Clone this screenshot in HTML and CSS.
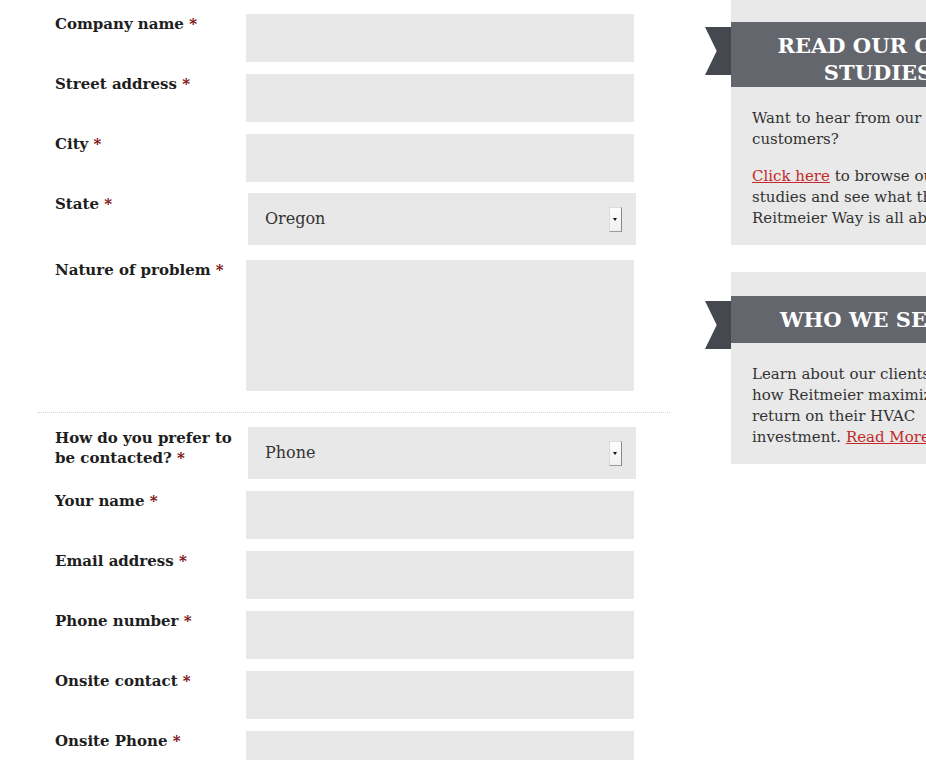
FILE: index.html
```html
<!DOCTYPE html>
<html lang="en">
<head>
<meta charset="utf-8">
<title>Service request</title>
<link rel="stylesheet" href="styles.css">
</head>
<body>
<div class="page">
  <form class="form">
    <div class="row">
      <label class="label" for="company">Company name <span class="req">*</span></label>
      <input class="field" id="company" type="text">
    </div>
    <div class="row">
      <label class="label" for="street">Street address <span class="req">*</span></label>
      <input class="field" id="street" type="text">
    </div>
    <div class="row">
      <label class="label" for="city">City <span class="req">*</span></label>
      <input class="field" id="city" type="text">
    </div>
    <div class="row">
      <label class="label" for="state">State <span class="req">*</span></label>
      <div class="select-wrap">
        <select class="select" id="state"><option>Oregon</option></select>
        <span class="select-btn"></span>
      </div>
    </div>
    <div class="row row-area">
      <label class="label" for="problem">Nature of problem <span class="req">*</span></label>
      <textarea class="field area" id="problem"></textarea>
    </div>
    <hr class="divider">
    <div class="row">
      <label class="label" for="contact">How do you prefer to be contacted? <span class="req">*</span></label>
      <div class="select-wrap">
        <select class="select" id="contact"><option>Phone</option></select>
        <span class="select-btn"></span>
      </div>
    </div>
    <div class="row">
      <label class="label" for="name">Your name <span class="req">*</span></label>
      <input class="field" id="name" type="text">
    </div>
    <div class="row">
      <label class="label" for="email">Email address <span class="req">*</span></label>
      <input class="field" id="email" type="text">
    </div>
    <div class="row">
      <label class="label" for="phone">Phone number <span class="req">*</span></label>
      <input class="field" id="phone" type="text">
    </div>
    <div class="row">
      <label class="label" for="onsite">Onsite contact <span class="req">*</span></label>
      <input class="field" id="onsite" type="text">
    </div>
    <div class="row">
      <label class="label" for="onsitephone">Onsite Phone <span class="req">*</span></label>
      <input class="field" id="onsitephone" type="text">
    </div>
  </form>

  <aside class="sidebar">
    <section class="panel">
      <h2 class="panel-title panel-title-two">Read our case studies</h2>
      <div class="panel-body">
        <p>Want to hear from our Reitmeier customers?</p>
        <p><a href="#">Click here</a> to browse our case studies and see what the Reitmeier Way is all about.</p>
      </div>
    </section>
    <section class="panel">
      <h2 class="panel-title">Who we serve</h2>
      <div class="panel-body">
        <p>Learn about our clients and see how Reitmeier maximizes the return on their HVAC investment. <a href="#">Read More</a></p>
      </div>
    </section>
  </aside>
</div>
</body>
</html>
```

FILE: styles.css
```css
html, body {
  margin: 0;
  padding: 0;
  background: #fff;
  overflow: hidden;
}

body {
  font-family: "DejaVu Serif", "Liberation Serif", serif;
  color: #333;
}

.page {
  display: flex;
  align-items: flex-start;
  padding-left: 38px;
  gap: 61px;
  width: 1300px;
}

.form {
  width: 632px;
  flex: none;
  padding-top: 14px;
}

.row {
  display: grid;
  grid-template-columns: 191px 388px;
  padding-left: 17px;
  margin-bottom: 12px;
  align-items: start;
}

.label {
  font-size: 15px;
  font-weight: bold;
  line-height: 20px;
  color: #1e1e1e;
  padding-right: 4px;
}

.req {
  color: #7b0d0d;
}

.field {
  box-sizing: border-box;
  width: 388px;
  height: 48px;
  margin: 0;
  border: none;
  background: #e8e8e8;
  font: inherit;
  display: block;
}

.area {
  height: 131px;
  resize: none;
}

.row-area {
  margin-top: 15px;
  margin-bottom: 21px;
}

.divider {
  border: none;
  border-top: 1px dotted #d4d4d4;
  margin: 0 0 15px 0;
  height: 0;
}

.select-wrap {
  position: relative;
  margin-left: 2px;
  width: 388px;
  height: 52px;
  margin-top: -1px;
}

.select {
  -webkit-appearance: none;
  appearance: none;
  box-sizing: border-box;
  width: 100%;
  height: 100%;
  border: none;
  background: #e8e8e8;
  font-family: "DejaVu Serif", serif;
  font-size: 16px;
  color: #333;
  padding: 0 0 2px 17px;
  margin: 0;
}

.select-btn {
  position: absolute;
  right: 14px;
  top: 14px;
  width: 13px;
  height: 25px;
  box-sizing: border-box;
  background: linear-gradient(#fdfdfd, #f1f1f1);
  border: 1px solid #dcdcdc;
  border-right: 1px solid #8a8a8a;
  border-bottom: 1px solid #9a9a9a;
  pointer-events: none;
}

.select-btn::after {
  content: "";
  position: absolute;
  left: 3px;
  top: 10px;
  border-left: 2.5px solid transparent;
  border-right: 2.5px solid transparent;
  border-top: 3px solid #111;
}

.sidebar {
  width: 294px;
  flex: none;
  margin-top: -2px;
}

.panel {
  background: #e9e9e9;
  padding: 24px 0 16px;
  margin-bottom: 27px;
}

.panel-title {
  position: relative;
  margin: 0;
  background: #63666d;
  color: #fff;
  text-transform: uppercase;
  text-align: center;
  font-family: "DejaVu Serif", serif;
  font-weight: bold;
  font-size: 21px;
  line-height: 27px;
  padding: 10px 20px 10px;
}

.panel-title-two {
  padding-bottom: 1px;
}

.panel-title::before {
  content: "";
  position: absolute;
  left: -26px;
  top: 5px;
  width: 26px;
  height: 48px;
  background: #45484f;
  clip-path: polygon(0 0, 100% 0, 100% 100%, 0 100%, 45% 50%);
}

.panel-body {
  padding: 21px 21px 0;
  font-size: 15px;
  line-height: 21px;
  color: #333;
}

.panel-body p {
  margin: 0 0 16px;
}

.panel-body p:last-child {
  margin-bottom: 0;
}

.panel-body a {
  color: #c4282a;
  text-decoration: underline;
}
```
